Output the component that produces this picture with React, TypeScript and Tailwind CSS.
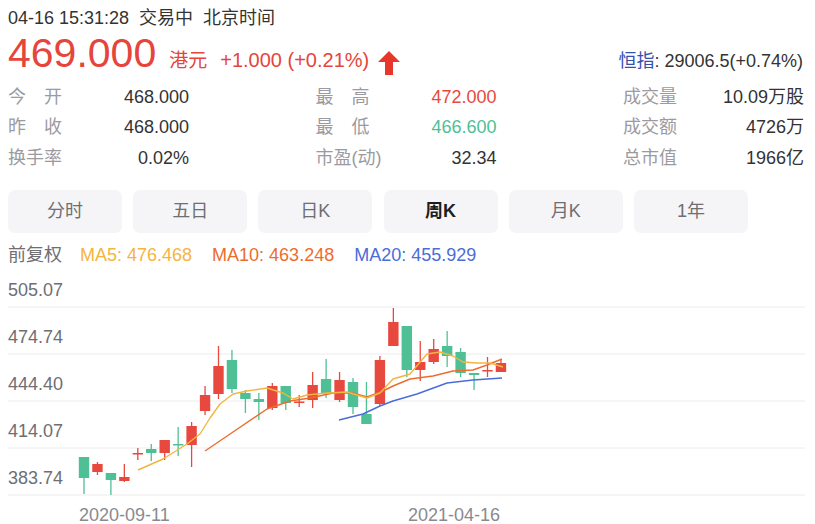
import React from 'react';

const FONT = '"Liberation Sans", "Noto Sans CJK SC", sans-serif';
const RED = '#e8493e';
const GREEN = '#4fbf95';

const STATS = [
  [
    { label: ['今', '开'], value: '468.000', color: 'text-[#333]' },
    { label: ['昨', '收'], value: '468.000', color: 'text-[#333]' },
    { label: ['换手率'], value: '0.02%', color: 'text-[#333]' },
  ],
  [
    { label: ['最', '高'], value: '472.000', color: 'text-[#e8493e]' },
    { label: ['最', '低'], value: '466.600', color: 'text-[#4fbf95]' },
    { label: ['市盈(动)'], value: '32.34', color: 'text-[#333]' },
  ],
  [
    { label: ['成交量'], value: '10.09万股', color: 'text-[#333]' },
    { label: ['成交额'], value: '4726万', color: 'text-[#333]' },
    { label: ['总市值'], value: '1966亿', color: 'text-[#333]' },
  ],
];

const TABS = ['分时', '五日', '日K', '周K', '月K', '1年'];

// [bodyTop, bodyBottom, wickTop, wickBottom, up?]
const CANDLES: [number, number, number, number, boolean][] = [
  [456, 477, 456, 493, false],
  [463, 471, 461, 474, true],
  [472, 479, 472, 494, false],
  [476, 480, 463, 481, true],
  [452, 453.5, 447, 459, true],
  [448, 452, 443, 460, false],
  [439, 452, 439, 459, true],
  [443, 444.5, 426, 455, false],
  [425, 444, 421, 466, true],
  [394, 410, 385, 414, true],
  [365, 393, 345, 398, true],
  [359, 388, 349, 392, false],
  [392, 398, 389, 412, false],
  [398, 401, 392, 419, false],
  [385, 407, 382, 409, true],
  [385, 402, 385, 409, false],
  [400.5, 402, 394, 406, true],
  [384, 399, 371, 407, true],
  [378, 392, 358, 397, false],
  [379, 399, 371, 401, true],
  [381, 406, 377, 413, false],
  [413, 423, 381, 423, false],
  [359, 403, 355, 405, true],
  [321, 345, 307, 345, true],
  [325, 369, 325, 376, false],
  [361, 369, 340, 380, true],
  [348, 361, 338, 363, true],
  [345, 355, 330, 366, false],
  [351, 372, 347, 376, false],
  [372, 374, 372, 389, false],
  [369, 370.5, 356, 376, true],
  [362, 371, 358, 371, true],
];

const MA5 = [[138,469],[163,458],[187,443],[200,433],[210,417],[220,403],[233,393],[247,390],[267,387],[283,392],[293,398],[307,394],[327,392],[347,391],[367,397],[380,392],[393,378],[410,373],[427,353],[440,351],[453,355],[463,361],[477,362],[490,362],[503,366]];
const MA10 = [[205,450],[233,431],[267,408],[290,400],[310,397],[333,392],[353,392],[367,396],[383,390],[393,385],[410,378],[433,375],[453,370],[473,369],[487,364],[502,358]];
const MA20 = [[339,419],[363,413],[380,405],[393,400],[417,393],[447,382],[473,379],[502,377]];

const pts = (a: number[][]) => a.map(p => p.join(',')).join(' ');

const AXIS = ['505.07', '474.74', '444.40', '414.07', '383.74'];

function Chart() {
  return (
    <svg width={815} height={254} viewBox="0 270 815 254" className="block">
      {AXIS.map((v, i) => {
        const y = 306 + i * 47;
        return (
          <g key={v}>
            <line x1={8} x2={805} y1={y} y2={y} stroke="#ececee" strokeWidth={1} />
            <text x={8} y={y - 11} fontSize={18} fill="#6e6e73" fontFamily={FONT}>{v}</text>
          </g>
        );
      })}
      {CANDLES.map(([bt, bb, wt, wb, up], i) => {
        const x = 84 + i * 13.45;
        const c = up ? RED : GREEN;
        return (
          <g key={i}>
            <line x1={x} x2={x} y1={wt} y2={wb} stroke={c} strokeWidth={1.3} />
            <rect x={x - 5.2} y={bt} width={10.4} height={Math.max(bb - bt, 1.5)} fill={c} />
          </g>
        );
      })}
      <polyline points={pts(MA20)} fill="none" stroke="#4a6dd8" strokeWidth={1.4} strokeLinejoin="round" />
      <polyline points={pts(MA10)} fill="none" stroke="#ec6d2e" strokeWidth={1.4} strokeLinejoin="round" />
      <polyline points={pts(MA5)} fill="none" stroke="#f4b53f" strokeWidth={1.4} strokeLinejoin="round" />
      <text x={79} y={519.5} fontSize={18} fill="#8a8a8e" fontFamily={FONT}>2020-09-11</text>
      <text x={408} y={519.5} fontSize={18} fill="#8a8a8e" fontFamily={FONT}>2021-04-16</text>
    </svg>
  );
}

export default function App() {
  return (
    <div className="w-[815px] h-[524px] bg-white overflow-hidden" style={{ fontFamily: FONT }}>
      <div className="px-2 pt-[6px]">
        <div className="text-[18px] leading-[24px] text-[#333]">
          04-16 15:31:28&nbsp;&nbsp;交易中&nbsp;&nbsp;北京时间
        </div>
        <div className="flex items-baseline h-[46px]">
          <span className="text-[41px] leading-[46px] text-[#e5453b]">469.000</span>
          <span className="ml-[13px] text-[19px] text-[#e5453b]">港元</span>
          <span className="ml-[13px] text-[20px] text-[#e5453b]">+1.000 (+0.21%)</span>
          <svg width={22} height={24} viewBox="0 0 22 24" className="ml-[9px] self-end mb-[1px]">
            <polygon points="11,0 22,11 15,11 15,24 7,24 7,11 0,11" fill="#e8362c" />
          </svg>
          <span className="ml-auto text-[18px] text-[#333] pr-[4px]">
            <span className="text-[#3450ad]">恒指</span>: 29006.5(+0.74%)
          </span>
        </div>
      </div>

      <div className="flex justify-between pl-2 pr-[11px] mt-[6px]">
        {STATS.map((col, ci) => (
          <div key={ci} className="w-[181px]">
            {col.map((row, ri) => (
              <div key={ri} className="flex justify-between items-center h-[30.5px] text-[18px] whitespace-nowrap">
                {row.label.length > 1 ? (
                  <span className="w-[54px] flex justify-between text-[#9b9b9f]">
                    {row.label.map(l => <span key={l}>{l}</span>)}
                  </span>
                ) : (
                  <span className="text-[#9b9b9f]">{row.label[0]}</span>
                )}
                <span className={row.color}>{row.value}</span>
              </div>
            ))}
          </div>
        ))}
      </div>

      <div className="flex gap-[11.2px] px-2 mt-[16px]">
        {TABS.map(t => (
          <div
            key={t}
            className={`w-[114px] h-[43px] rounded-[7px] bg-[#f5f5f7] flex items-center justify-center text-[18px] ${
              t === '周K' ? 'font-bold text-[#1d1d1f]' : 'text-[#6e6e73]'
            }`}
          >
            {t}
          </div>
        ))}
      </div>

      <div className="flex items-center h-[22px] px-2 mt-[12px] text-[18px]">
        <span className="text-[#6e6e73]">前复权</span>
        <span className="ml-[18px] text-[#f4b53f]">MA5: 476.468</span>
        <span className="ml-[20px] text-[#ec6d2e]">MA10: 463.248</span>
        <span className="ml-[20px] text-[#4a6dd8]">MA20: 455.929</span>
      </div>

      <div className="mt-[4px]">
        <Chart />
      </div>
    </div>
  );
}
